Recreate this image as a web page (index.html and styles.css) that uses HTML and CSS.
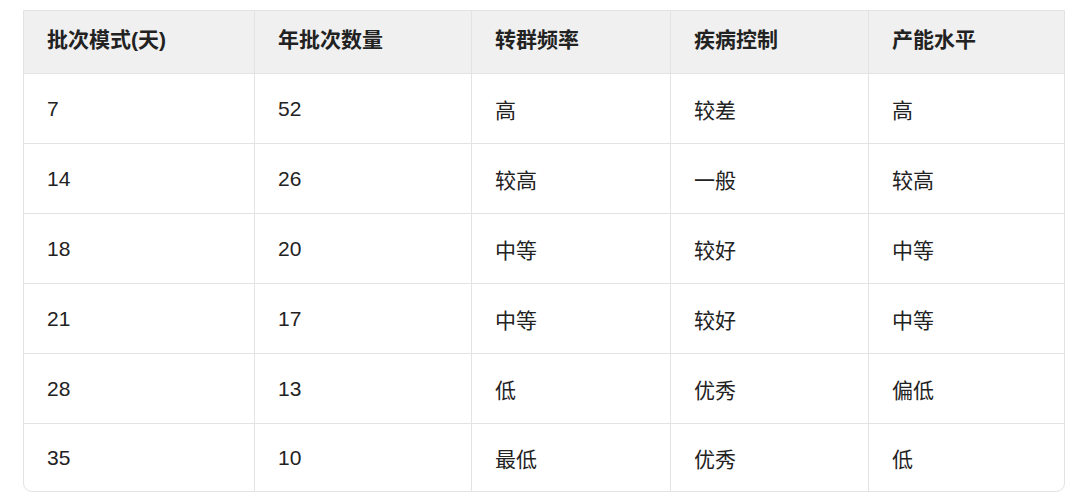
FILE: index.html
```html
<!DOCTYPE html>
<html lang="zh-CN">
<head>
<meta charset="utf-8">
<link rel="stylesheet" href="styles.css">
</head>
<body>
<div class="page">
  <table class="grid">
    <colgroup>
      <col class="c1"><col class="c2"><col class="c3"><col class="c4"><col class="c5">
    </colgroup>
    <thead>
      <tr><th>批次模式(天)</th><th>年批次数量</th><th>转群频率</th><th>疾病控制</th><th>产能水平</th></tr>
    </thead>
    <tbody>
      <tr><td>7</td><td>52</td><td>高</td><td>较差</td><td>高</td></tr>
      <tr><td>14</td><td>26</td><td>较高</td><td>一般</td><td>较高</td></tr>
      <tr><td>18</td><td>20</td><td>中等</td><td>较好</td><td>中等</td></tr>
      <tr><td>21</td><td>17</td><td>中等</td><td>较好</td><td>中等</td></tr>
      <tr><td>28</td><td>13</td><td>低</td><td>优秀</td><td>偏低</td></tr>
      <tr><td>35</td><td>10</td><td>最低</td><td>优秀</td><td>低</td></tr>
    </tbody>
  </table>
</div>
</body>
</html>
```
FILE: styles.css
```css
html, body {
  margin: 0;
  padding: 0;
  background: #ffffff;
}
.page {
  padding: 10px 15px 0 23px;
  font-family: "Liberation Sans", "Noto Sans CJK SC", sans-serif;
  color: #222222;
}
.grid {
  width: 1042px;
  table-layout: fixed;
  border-collapse: separate;
  border-spacing: 0;
  border: 1px solid #e3e3e3;
  border-radius: 0 0 9px 9px;
  font-size: 21px;
}
.c1 { width: 231px; }
.c2 { width: 217px; }
.c3 { width: 199px; }
.c4 { width: 198px; }
.c5 { width: 195px; }
.grid th,
.grid td {
  text-align: left;
  padding: 0 0 0 23px;
  border-right: 1px solid #e3e3e3;
  border-bottom: 1px solid #e3e3e3;
  white-space: nowrap;
}
.grid th:last-child,
.grid td:last-child {
  border-right: none;
}
.grid tbody tr:last-child td {
  border-bottom: none;
}
.grid th {
  background: #f0f0f0;
  font-weight: 700;
  height: 63px;
  box-sizing: border-box;
  padding-bottom: 8px;
}
.grid td {
  height: 69px;
  font-weight: 400;
}
.grid tbody tr:last-child td {
  height: 67px;
}
```
